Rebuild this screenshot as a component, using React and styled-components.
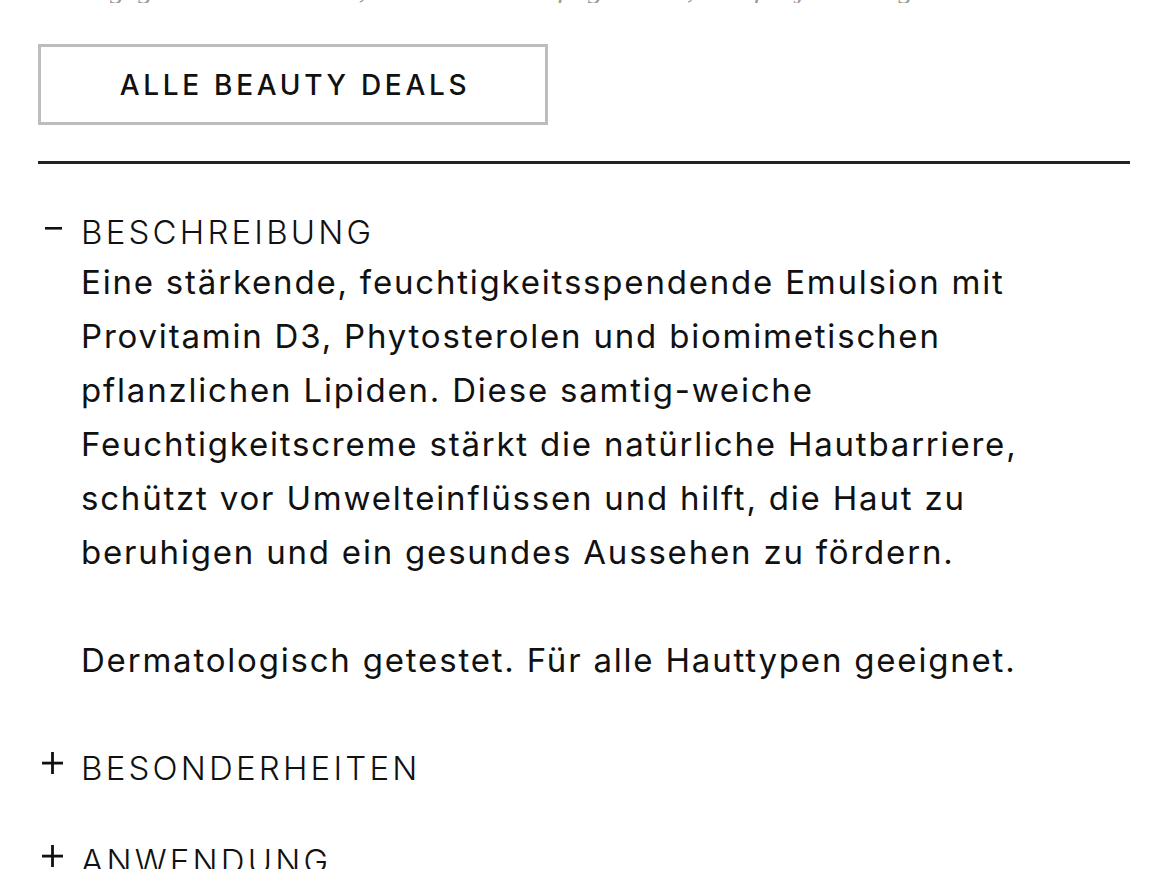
import styled, { createGlobalStyle } from "styled-components";
import { useState } from "react";

const GlobalStyle = createGlobalStyle`
  html, body {
    margin: 0;
    padding: 0;
    background: #fff;
  }
  body {
    font-family: Inter, "Noto Sans", sans-serif;
    color: #111;
    overflow: hidden;
  }
`;

const sections = [
  {
    title: "BESCHREIBUNG",
    paragraphs: [
      "Eine stärkende, feuchtigkeitsspendende Emulsion mit Provitamin D3, Phytosterolen und biomimetischen pflanzlichen Lipiden. Diese samtig-weiche Feuchtigkeitscreme stärkt die natürliche Hautbarriere, schützt vor Umwelteinflüssen und hilft, die Haut zu beruhigen und ein gesundes Aussehen zu fördern.",
      "Dermatologisch getestet. Für alle Hauttypen geeignet.",
    ],
  },
  { title: "BESONDERHEITEN", paragraphs: [] },
  { title: "ANWENDUNG", paragraphs: [] },
];

export default function App() {
  const [open, setOpen] = useState(0);

  return (
    <Page>
      <GlobalStyle />
      <Teaser>
        gegen trockene Haut, die sich nach Pflege sehnt, und für jeden Tag
      </Teaser>
      <DealsButton>ALLE BEAUTY DEALS</DealsButton>
      <Divider />
      <Accordion>
        {sections.map((s, i) => (
          <Item key={s.title}>
            <Header onClick={() => setOpen(open === i ? -1 : i)}>
              <Toggle>{open === i ? <MinusIcon /> : <PlusIcon />}</Toggle>
              <Title>{s.title}</Title>
            </Header>
            {open === i && (
              <Body>
                {s.paragraphs.map((p) => (
                  <Paragraph key={p.slice(0, 12)}>{p}</Paragraph>
                ))}
              </Body>
            )}
          </Item>
        ))}
      </Accordion>
    </Page>
  );
}

function MinusIcon() {
  return (
    <svg width="20" height="20" viewBox="0 0 20 20">
      <rect x="1" y="10" width="17" height="2.6" fill="#111" />
    </svg>
  );
}

function PlusIcon() {
  return (
    <svg width="22" height="22" viewBox="0 0 22 22">
      <rect x="0" y="9.7" width="21" height="2.8" fill="#111" />
      <rect x="9.1" y="0" width="2.8" height="22" fill="#111" />
    </svg>
  );
}

const Page = styled.div`
  padding: 0 39px 0 38px;
  height: 869px;
  overflow: hidden;
  display: flex;
  flex-direction: column;

  & > * {
    flex-shrink: 0;
  }
`;

const Teaser = styled.p`
  margin: -27px 0 0 72px;
  height: 30px;
  font-family: "Liberation Serif", serif;
  font-style: italic;
  font-size: 30px;
  line-height: 30px;
  color: #9a9a9a;
  white-space: nowrap;
  overflow: hidden;
`;

const DealsButton = styled.button`
  margin-top: 41px;
  width: 510px;
  height: 81px;
  border: 3px solid #bdbdbd;
  background: #fff;
  font-family: inherit;
  font-size: 28px;
  font-weight: 500;
  letter-spacing: 3.7px;
  padding: 0 0 0 4px;
  color: #111;
  cursor: pointer;
`;

const Divider = styled.hr`
  margin: 36px 0 0;
  border: none;
  height: 3px;
  background: #222;
`;

const Accordion = styled.div`
  display: flex;
  flex-direction: column;
  gap: 57px;
  margin-top: 50px;
`;

const Item = styled.div`
  display: flex;
  flex-direction: column;
`;

const Header = styled.div`
  display: flex;
  align-items: center;
  gap: 17px;
  cursor: pointer;
  height: 36px;
`;

const Toggle = styled.span`
  width: 26px;
  display: flex;
  justify-content: flex-end;
  margin-top: -10px;
`;

const Title = styled.span`
  font-size: 33px;
  font-weight: 350;
  letter-spacing: 3.2px;
`;

const Body = styled.div`
  padding-left: 43px;
  padding-bottom: 6px;
  margin-top: 5px;
`;

const Paragraph = styled.p`
  margin: 0 0 54px;
  font-size: 33px;
  line-height: 54px;
  font-weight: 400;
  letter-spacing: 1.8px;
  max-width: 960px;

  &:last-child {
    margin-bottom: 0;
  }
`;
